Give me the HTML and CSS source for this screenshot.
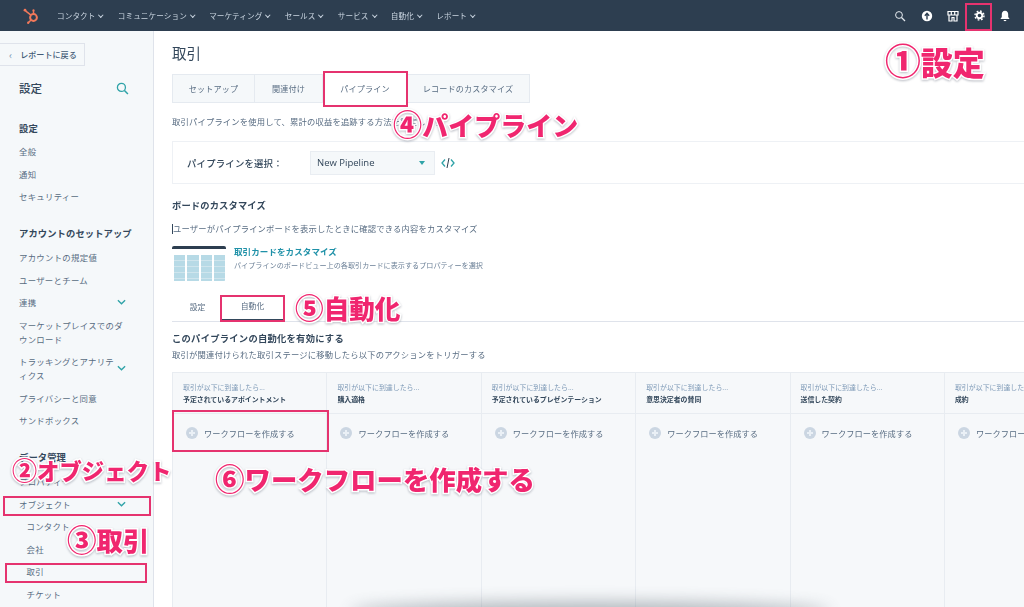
FILE: index.html
```html
<!DOCTYPE html>
<html lang="ja">
<head>
<meta charset="utf-8">
<title>取引</title>
<link rel="stylesheet" href="styles.css">
</head>
<body>
<header class="topbar">
  <svg class="logo" viewBox="0 0 20 20" width="20" height="20"><circle cx="11.5" cy="11.5" r="3.4" fill="none" stroke="#f2785a" stroke-width="2"/><path d="M11.5 8V4.5M9 9.2L3.5 4.8M9 14L6.5 16.5" fill="none" stroke="#f2785a" stroke-width="1.5"/><circle cx="3" cy="4.2" r="1.4" fill="#f2785a"/><circle cx="11.5" cy="4.4" r="1.1" fill="#f2785a"/><circle cx="6.2" cy="16.8" r="1.2" fill="#f2785a"/></svg>
  <nav class="nav">
    <span class="nav-item">コンタクト<i class="caret"></i></span>
    <span class="nav-item">コミュニケーション<i class="caret"></i></span>
    <span class="nav-item">マーケティング<i class="caret"></i></span>
    <span class="nav-item">セールス<i class="caret"></i></span>
    <span class="nav-item">サービス<i class="caret"></i></span>
    <span class="nav-item">自動化<i class="caret"></i></span>
    <span class="nav-item">レポート<i class="caret"></i></span>
  </nav>
  <div class="top-icons">
    <svg viewBox="0 0 12 12" width="12" height="12"><circle cx="5" cy="5" r="3.4" fill="none" stroke="#e6ebf0" stroke-width="1"/><path d="M7.5 7.5L11 11" stroke="#e6ebf0" stroke-width="1.2"/></svg>
    <svg viewBox="0 0 12 12" width="12" height="12"><circle cx="6" cy="6" r="5.2" fill="#fff"/><path d="M6 9.5V4M3.8 5.8L6 3.4L8.2 5.8" fill="none" stroke="#2d3e50" stroke-width="1.4"/></svg>
    <svg viewBox="0 0 12 12" width="12" height="12"><path d="M1 1.5H11V5H1ZM2 5V11H5V7.5H7V11H10V5M4.3 1.5V5M7.7 1.5V5" fill="none" stroke="#fff" stroke-width="1.2"/></svg>
    <svg viewBox="0 0 12 12" width="11" height="11"><circle cx="6" cy="6" r="3" fill="none" stroke="#fff" stroke-width="2"/><circle cx="6" cy="6" r="4.9" fill="none" stroke="#fff" stroke-width="1.6" stroke-dasharray="1.9 1.95"/></svg>
    <svg viewBox="0 0 12 12" width="12" height="12"><path d="M6 .8C8.3.8 9.2 2.6 9.2 4.6V7L10.6 9H1.4L2.8 7V4.6C2.8 2.6 3.7.8 6 .8Z" fill="#fff"/><path d="M4.6 10H7.4C7.2 11.6 4.8 11.6 4.6 10Z" fill="#fff"/></svg>
  </div>
</header>
<div class="layout">
  <aside class="sidebar">
    <div class="back"><span class="back-arrow">‹</span>レポートに戻る</div>
    <div class="side-title">
      <span>設定</span>
      <svg viewBox="0 0 12 12" width="13" height="13"><circle cx="5" cy="5" r="3.7" fill="none" stroke="#2fa3a8" stroke-width="1.2"/><path d="M7.8 7.8L11 11" stroke="#2fa3a8" stroke-width="1.4"/></svg>
    </div>
    <div class="side-head first">設定</div>
    <div class="side-item">全般</div>
    <div class="side-item">通知</div>
    <div class="side-item">セキュリティー</div>
    <div class="side-head">アカウントのセットアップ</div>
    <div class="side-item">アカウントの規定値</div>
    <div class="side-item">ユーザーとチーム</div>
    <div class="side-item">連携<svg class="chev" viewBox="0 0 10 6"><path d="M1 1L5 5L9 1" fill="none" stroke="#2fa3a8" stroke-width="1.5"/></svg></div>
    <div class="side-item"><span class="wrap">マーケットプレイスでのダ<br>ウンロード</span></div>
    <div class="side-item"><span class="wrap">トラッキングとアナリテ<br>ィクス</span><svg class="chev" viewBox="0 0 10 6"><path d="M1 1L5 5L9 1" fill="none" stroke="#2fa3a8" stroke-width="1.5"/></svg></div>
    <div class="side-item">プライバシーと同意</div>
    <div class="side-item">サンドボックス</div>
    <div class="side-head">データ管理</div>
    <div class="side-item">プロパティー</div>
    <div class="side-item">オブジェクト<svg class="chev" viewBox="0 0 10 6"><path d="M1 1L5 5L9 1" fill="none" stroke="#2fa3a8" stroke-width="1.5"/></svg></div>
    <div class="side-item sub">コンタクト</div>
    <div class="side-item sub">会社</div>
    <div class="side-item sub">取引</div>
    <div class="side-item sub">チケット</div>
  </aside>
  <main class="main">
    <h1 class="title">取引</h1>
    <div class="tabs">
      <span class="tab t1">セットアップ</span>
      <span class="tab t2">関連付け</span>
      <span class="tab t3 active">パイプライン</span>
      <span class="tab t4">レコードのカスタマイズ</span>
    </div>
    <p class="desc">取引パイプラインを使用して、累計の収益を追跡する方法を設定します。</p>
    <div class="picker">
      <span class="picker-label">パイプラインを選択：</span>
      <span class="select">New Pipeline<i class="select-caret"></i></span>
      <svg class="code" viewBox="0 0 14 12" width="14" height="12"><path d="M4 2.5L1 6L4 9.5M10 2.5L13 6L10 9.5" fill="none" stroke="#2fa3a8" stroke-width="1.3"/><path d="M8 1L6 11" stroke="#2d3e50" stroke-width="1"/></svg>
    </div>
    <h2 class="section">ボードのカスタマイズ</h2>
    <p class="desc user">ユーザーがパイプラインボードを表示したときに確認できる内容をカスタマイズ</p>
    <div class="custom">
      <div class="thumb">
        <div class="thumb-bar"></div>
        <div class="thumb-cols"><i></i><i></i><i></i><i></i></div>
      </div>
      <div>
        <div class="custom-title">取引カードをカスタマイズ</div>
        <div class="custom-sub">パイプラインのボードビュー上の各取引カードに表示するプロパティーを選択</div>
      </div>
    </div>
    <div class="subtabs">
      <span class="subtab s1">設定</span>
      <span class="subtab s2">自動化</span>
    </div>
    <h2 class="section auto">このパイプラインの自動化を有効にする</h2>
    <p class="desc trig">取引が関連付けられた取引ステージに移動したら以下のアクションをトリガーする</p>
    <div class="board">
      <section class="col"><header class="col-head"><div class="when">取引が以下に到達したら...</div><div class="stage">予定されているアポイントメント</div></header><div class="add"><i class="plus"></i>ワークフローを作成する</div></section>
      <section class="col"><header class="col-head"><div class="when">取引が以下に到達したら...</div><div class="stage">購入適格</div></header><div class="add"><i class="plus"></i>ワークフローを作成する</div></section>
      <section class="col"><header class="col-head"><div class="when">取引が以下に到達したら...</div><div class="stage">予定されているプレゼンテーション</div></header><div class="add"><i class="plus"></i>ワークフローを作成する</div></section>
      <section class="col"><header class="col-head"><div class="when">取引が以下に到達したら...</div><div class="stage">意思決定者の賛同</div></header><div class="add"><i class="plus"></i>ワークフローを作成する</div></section>
      <section class="col"><header class="col-head"><div class="when">取引が以下に到達したら...</div><div class="stage">送信した契約</div></header><div class="add"><i class="plus"></i>ワークフローを作成する</div></section>
      <section class="col"><header class="col-head"><div class="when">取引が以下に到達したら...</div><div class="stage">成約</div></header><div class="add"><i class="plus"></i>ワークフローを作成する</div></section>
    </div>
  </main>
</div>
<div class="shade"></div>
<div class="box b-gear"></div>
<div class="box b-pipe"></div>
<div class="box b-auto"></div>
<div class="box b-obj"></div>
<div class="box b-deal"></div>
<div class="box b-flow"></div>
<div class="note n1"><span class="num">①</span>設定</div>
<div class="note n2"><span class="num">②</span>オブジェクト</div>
<div class="note n3"><span class="num">③</span>取引</div>
<div class="note n4"><span class="num">④</span>パイプライン</div>
<div class="note n5"><span class="num">⑤</span>自動化</div>
<div class="note n6"><span class="num">⑥</span>ワークフローを作成する</div>
</body>
</html>
```
FILE: styles.css
```css
* { box-sizing: border-box; }
html, body { margin: 0; height: 607px; overflow: hidden; }
body {
  position: relative;
  width: 1024px;
  background: #fff;
  color: #33475b;
  font-family: "Noto Sans CJK JP", "Noto Sans", sans-serif;
  font-size: 8.5px;
}
i { display: block; font-style: normal; }
h1, h2, p { margin: 0; font-weight: inherit; }

.topbar { display: flex; align-items: center; height: 31px; background: #2d3e50; filter: blur(.3px); }
.logo { margin-left: 22px; flex: none; }
.nav { display: flex; margin-left: 15px; }
.nav-item { display: flex; align-items: center; color: #cbd6e2; font-size: 7.6px; line-height: 12px; white-space: nowrap; letter-spacing: .1px; margin-right: 14.8px; }
.caret { width: 3.5px; height: 3.5px; margin: -2px 0 0 4px; border-right: 1px solid #cbd6e2; border-bottom: 1px solid #cbd6e2; transform: rotate(45deg); }
.top-icons { display: flex; align-items: center; gap: 14.5px; margin-left: auto; margin-right: 13px; }

.layout { display: flex; height: 576px; filter: blur(.3px); }
.sidebar { flex: none; width: 154px; background: #f5f8fa; border-right: 1px solid #dfe3eb; padding-top: 12px; overflow: hidden; }
.back { display: flex; align-items: center; width: 85px; height: 23px; background: #f5f8fa; border: 1px solid #dfe3eb; border-left: 0; font-size: 8.1px; font-weight: 500; color: #425b76; padding-left: 9px; }
.back-arrow { margin-right: 8px; font-size: 10px; color: #7c98b6; line-height: 1; }
.side-title { display: flex; align-items: center; justify-content: space-between; width: 129px; padding-left: 19px; margin-top: 11px; height: 22px; font-size: 11.5px; font-weight: 500; color: #33475b; }
.side-head { padding-left: 19px; font-size: 9.3px; line-height: 14px; font-weight: 700; color: #33475b; margin-top: 18.75px; margin-bottom: 5.75px; letter-spacing: .1px; white-space: nowrap; }
.side-head.first { margin-top: 22px; margin-bottom: 4.75px; }
.side-item { display: flex; align-items: center; justify-content: space-between; width: 126px; padding: 4.25px 0 4.25px 19px; font-size: 8.4px; line-height: 14px; color: #586c82; letter-spacing: .3px; }
.side-item.sub { padding-left: 26.5px; }
.wrap { flex: none; white-space: nowrap; }
.chev { width: 9px; height: 6px; flex: none; }

.main { flex: 1; min-width: 0; padding: 12px 0 0 18px; overflow: hidden; }
.title { font-size: 14.5px; line-height: 19px; font-weight: 400; color: #33475b; }
.tabs { display: flex; height: 29px; margin-top: 12px; }
.tab { display: flex; align-items: center; justify-content: center; height: 29px; background: #f5f8fa; border: 1px solid #e5eaf0; border-left: 0; font-size: 8.1px; letter-spacing: .15px; color: #586c82; white-space: nowrap; }
.tab.t1 { width: 83px; border-left: 1px solid #e5eaf0; }
.tab.t2 { width: 68px; }
.tab.t3 { width: 84px; background: #fff; border: 0; }
.tab.t4 { width: 123px; }
.desc { font-size: 8.3px; line-height: 12px; letter-spacing: .18px; color: #586c82; white-space: nowrap; margin-top: 12px; }
.picker { display: flex; align-items: center; height: 43px; margin-top: 14px; padding-left: 14px; border: 1px solid #eef1f5; border-right: 0; }
.picker-label { width: 123px; flex: none; font-size: 9.4px; font-weight: 500; color: #33475b; letter-spacing: .2px; }
.select { display: flex; align-items: center; justify-content: space-between; width: 125px; height: 24px; padding: 0 9px 0 6px; background: #f5f8fa; border: 1px solid #e9edf2; font-family: "Open Sans", sans-serif; font-size: 9.5px; color: #33475b; }
.select-caret { width: 0; height: 0; border: 3.5px solid transparent; border-top: 4px solid #2fa3a8; border-bottom: 0; }
.code { margin-left: 6px; }
.section { font-size: 9.3px; line-height: 13px; font-weight: 700; color: #33475b; letter-spacing: .12px; margin-top: 15px; }
.desc.user { margin-top: 10px; }
.desc.user::before { content: ""; display: inline-block; width: 1px; height: 10px; vertical-align: -2px; background: #33475b; }
.custom { display: flex; gap: 8px; margin-top: 12px; }
.thumb { width: 54px; height: 35px; flex: none; background: #fff; border-radius: 2px; overflow: hidden; }
.thumb-bar { height: 3px; background: #2d3e50; }
.thumb-cols { display: flex; gap: 2px; height: 32px; padding: 6px 1px 0 2px; }
.thumb-cols i { flex: 1; background: repeating-linear-gradient(#b7dae6 0 5px, #cfe5ed 5px 6px); }
.custom-title { font-size: 8.5px; line-height: 12px; font-weight: 700; color: #1f91a8; letter-spacing: .1px; margin-top: -1px; }
.custom-sub { font-size: 7.1px; line-height: 12px; color: #6a7f96; letter-spacing: .03px; margin-top: 2px; }
.subtabs { display: flex; height: 29px; margin-top: 12px; border-bottom: 1px solid #dfe3eb; }
.subtab { display: flex; align-items: center; justify-content: center; font-size: 7.8px; color: #586c82; padding-bottom: 2px; }
.subtab.s1 { width: 48px; padding-left: 3px; }
.subtab.s2 { width: 65px; border-bottom: 2px solid #33475b; }
.section.auto { margin-top: 10px; font-size: 9.3px; letter-spacing: .25px; }
.desc.trig { margin-top: 3px; letter-spacing: .2px; }
.board { display: flex; height: 240px; margin-top: 12px; background: #f6f8fa; border-top: 1px solid #e8ecf1; border-left: 1px solid #e8ecf1; }
.col { flex: none; width: 154.4px; border-right: 1px solid #e8ecf1; }
.col-head { height: 41px; padding: 9px 10px 0 10px; border-bottom: 1px solid #e8ecf1; }
.when { font-size: 6.9px; line-height: 11px; color: #7c98b6; letter-spacing: .03px; white-space: nowrap; }
.stage { font-size: 6.9px; line-height: 12px; font-weight: 700; color: #33475b; white-space: nowrap; }
.add { display: flex; align-items: center; margin-top: 13px; padding-left: 13px; font-size: 8.2px; line-height: 12px; color: #586c82; letter-spacing: .07px; white-space: nowrap; }
.plus { position: relative; width: 12px; height: 12px; margin-right: 6px; flex: none; border-radius: 50%; background: #cbd6e2; }
.plus::before { content: ""; position: absolute; left: 3px; right: 3px; top: 5px; height: 2px; background: #eaf0f6; }
.plus::after { content: ""; position: absolute; top: 3px; bottom: 3px; left: 5px; width: 2px; background: #eaf0f6; }

.shade { position: absolute; left: 350px; top: 602px; width: 480px; height: 20px; border-radius: 50%; background: #5b6670; opacity: .45; filter: blur(8px); }

.box { position: absolute; border: 2px solid #e5336f; }
.b-gear { left: 965px; top: 3px; width: 27px; height: 28px; }
.b-pipe { left: 323px; top: 71px; width: 85px; height: 36px; }
.b-auto { left: 220px; top: 295px; width: 65px; height: 27px; }
.b-obj { left: 3px; top: 496px; width: 148px; height: 20px; }
.b-deal { left: 5px; top: 563px; width: 142px; height: 20px; }
.b-flow { left: 172px; top: 410px; width: 157px; height: 42px; }

.note {
  position: absolute;
  color: #f0266f;
  font-weight: 900;
  white-space: nowrap;
  line-height: 1;
  -webkit-text-stroke: 3px #fff;
  paint-order: stroke fill;
  filter: drop-shadow(0 1px 1px rgba(60, 70, 90, .35));
}
.num { font-size: 1.12em; line-height: 1; }
.n1 { left: 885px; top: 42px; font-size: 32px; }
.n2 { left: 12px; top: 457px; font-size: 22.4px; }
.n3 { left: 67px; top: 524px; font-size: 26.4px; }
.n4 { left: 393px; top: 109px; font-size: 26px; }
.n5 { left: 295px; top: 293px; font-size: 25.6px; }
.n6 { left: 215px; top: 463px; font-size: 26.4px; }
```
